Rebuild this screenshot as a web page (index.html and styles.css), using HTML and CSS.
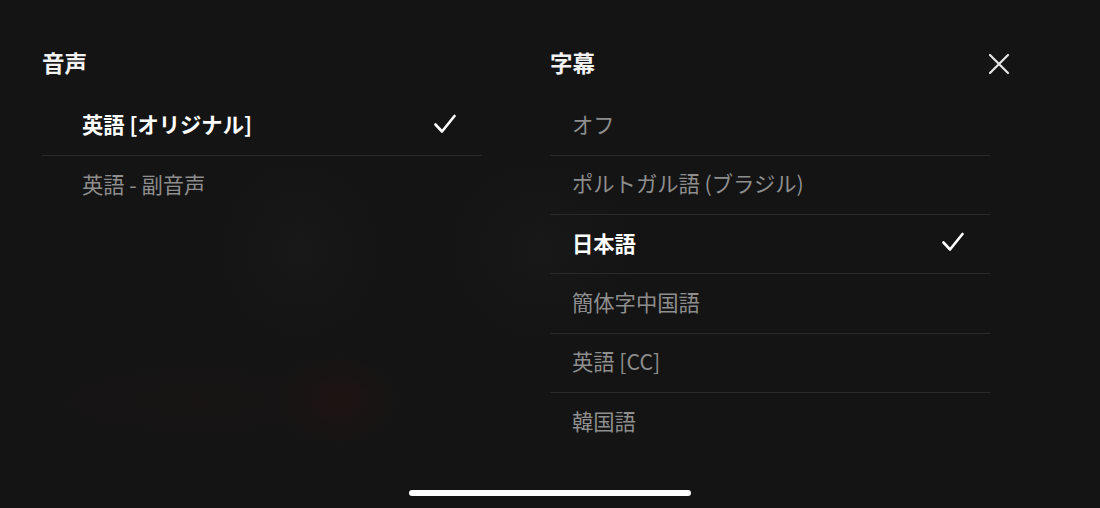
FILE: index.html
```html
<!DOCTYPE html>
<html lang="ja">
<head>
<meta charset="utf-8">
<link rel="stylesheet" href="styles.css">
</head>
<body>
<div class="screen">
  <div class="panels">
    <section class="col">
      <h2 class="heading">音声</h2>
      <ul class="list">
        <li class="row selected"><span class="label">英語 [オリジナル]</span>
          <svg class="check" viewBox="0 0 22 20" width="22" height="20"><polyline points="1.5,10.5 8,17.5 20.5,2" fill="none" stroke="#fff" stroke-width="2.6" stroke-linecap="round" stroke-linejoin="round"/></svg>
        </li>
        <li class="row"><span class="label">英語 - 副音声</span></li>
      </ul>
    </section>
    <section class="col col-right">
      <div class="head-row">
        <h2 class="heading">字幕</h2>
        <button class="close" aria-label="閉じる">
          <svg viewBox="0 0 22 22" width="22" height="22"><path d="M2 2 L20 20 M20 2 L2 20" stroke="#e6e6e6" stroke-width="2.2" stroke-linecap="round"/></svg>
        </button>
      </div>
      <ul class="list list-right">
        <li class="row"><span class="label">オフ</span></li>
        <li class="row"><span class="label">ポルトガル語 (ブラジル)</span></li>
        <li class="row selected"><span class="label">日本語</span>
          <svg class="check" viewBox="0 0 22 20" width="22" height="20"><polyline points="1.5,10.5 8,17.5 20.5,2" fill="none" stroke="#fff" stroke-width="2.6" stroke-linecap="round" stroke-linejoin="round"/></svg>
        </li>
        <li class="row"><span class="label">簡体字中国語</span></li>
        <li class="row"><span class="label">英語 [CC]</span></li>
        <li class="row"><span class="label">韓国語</span></li>
      </ul>
    </section>
  </div>
  <div class="home-indicator"></div>
</div>
</body>
</html>
```

FILE: styles.css
```css
* { box-sizing: border-box; }
html, body {
  margin: 0;
  padding: 0;
  width: 1100px;
  height: 508px;
  overflow: hidden;
  background: #141414;
}
.screen {
  width: 1100px;
  height: 508px;
  display: flex;
  flex-direction: column;
  font-family: "Noto Sans CJK JP", "Noto Sans", sans-serif;
  background:
    radial-gradient(ellipse 60px 50px at 340px 400px, rgba(60, 18, 14, 0.22), rgba(0,0,0,0)),
    radial-gradient(ellipse 220px 50px at 200px 400px, rgba(35, 20, 18, 0.2), rgba(0,0,0,0)),
    radial-gradient(ellipse 80px 90px at 300px 250px, rgba(40, 40, 40, 0.2), rgba(0,0,0,0)),
    radial-gradient(ellipse 90px 90px at 540px 250px, rgba(40, 40, 40, 0.2), rgba(0,0,0,0)),
    #141414;
}
.panels {
  display: flex;
  gap: 68px;
  padding: 47px 0 0 42px;
  flex: 1;
}
.col {
  width: 440px;
}
.heading {
  margin: 0;
  font-size: 22.5px;
  line-height: 30px;
  font-weight: 700;
  color: #f2f2f2;
}
.head-row {
  display: flex;
  justify-content: space-between;
  align-items: center;
  margin-right: -20px;
}
.close {
  width: 22px;
  height: 22px;
  padding: 0;
  border: 0;
  background: none;
  display: flex;
  margin-top: 4px;
}
.list {
  list-style: none;
  margin: 19.5px 0 0 0;
  padding: 0;
}
.row {
  height: 59.3px;
  display: flex;
  align-items: center;
  justify-content: space-between;
  padding: 0 26px 4px 40px;
  border-bottom: 1px solid #2a2a2a;
  font-size: 21.3px;
  color: #8e8e8e;
}
.list-right .row {
  padding-left: 22px;
}
.row:last-child {
  border-bottom: 0;
}
.row.selected {
  color: #ffffff;
  font-weight: 700;
}
.check {
  display: block;
}
.home-indicator {
  align-self: center;
  width: 282px;
  height: 6px;
  border-radius: 3px;
  background: #ffffff;
  margin-bottom: 12px;
}
```
